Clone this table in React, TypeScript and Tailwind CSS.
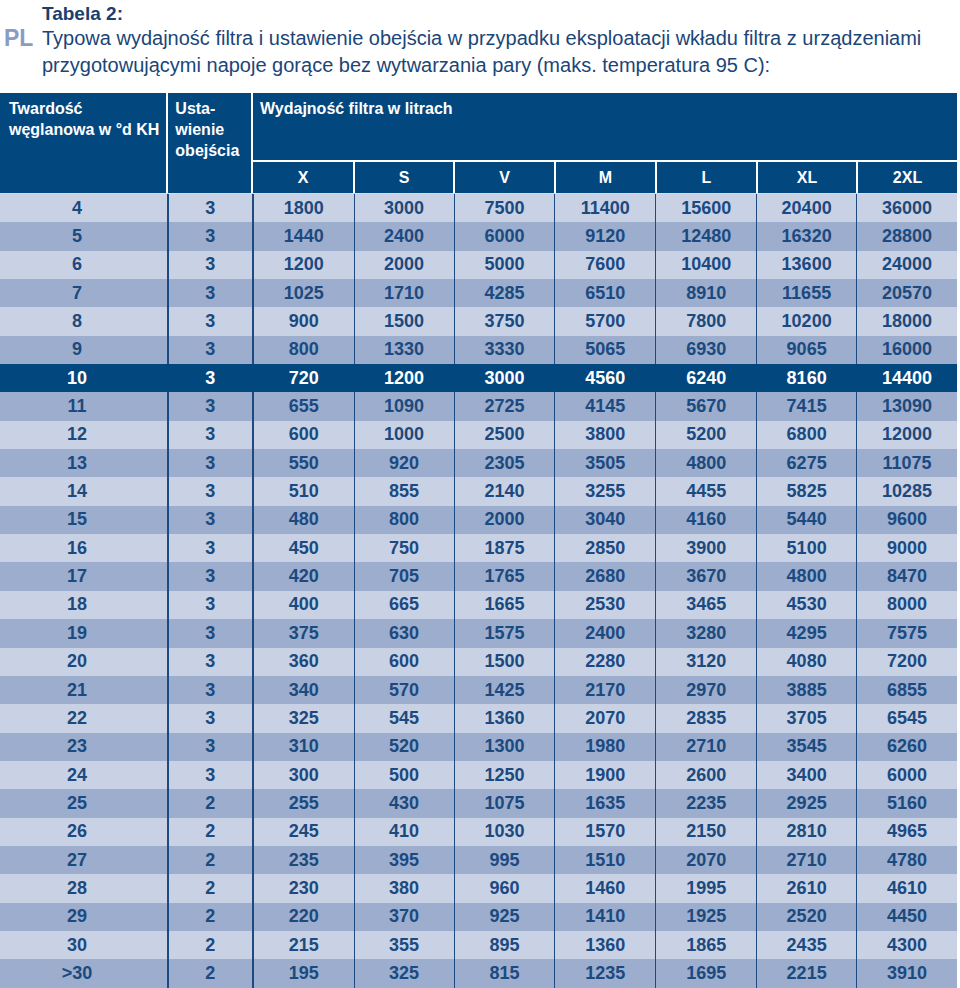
import React from "react";

const rows: string[][] = [
  ["4", "3", "1800", "3000", "7500", "11400", "15600", "20400", "36000"],
  ["5", "3", "1440", "2400", "6000", "9120", "12480", "16320", "28800"],
  ["6", "3", "1200", "2000", "5000", "7600", "10400", "13600", "24000"],
  ["7", "3", "1025", "1710", "4285", "6510", "8910", "11655", "20570"],
  ["8", "3", "900", "1500", "3750", "5700", "7800", "10200", "18000"],
  ["9", "3", "800", "1330", "3330", "5065", "6930", "9065", "16000"],
  ["10", "3", "720", "1200", "3000", "4560", "6240", "8160", "14400"],
  ["11", "3", "655", "1090", "2725", "4145", "5670", "7415", "13090"],
  ["12", "3", "600", "1000", "2500", "3800", "5200", "6800", "12000"],
  ["13", "3", "550", "920", "2305", "3505", "4800", "6275", "11075"],
  ["14", "3", "510", "855", "2140", "3255", "4455", "5825", "10285"],
  ["15", "3", "480", "800", "2000", "3040", "4160", "5440", "9600"],
  ["16", "3", "450", "750", "1875", "2850", "3900", "5100", "9000"],
  ["17", "3", "420", "705", "1765", "2680", "3670", "4800", "8470"],
  ["18", "3", "400", "665", "1665", "2530", "3465", "4530", "8000"],
  ["19", "3", "375", "630", "1575", "2400", "3280", "4295", "7575"],
  ["20", "3", "360", "600", "1500", "2280", "3120", "4080", "7200"],
  ["21", "3", "340", "570", "1425", "2170", "2970", "3885", "6855"],
  ["22", "3", "325", "545", "1360", "2070", "2835", "3705", "6545"],
  ["23", "3", "310", "520", "1300", "1980", "2710", "3545", "6260"],
  ["24", "3", "300", "500", "1250", "1900", "2600", "3400", "6000"],
  ["25", "2", "255", "430", "1075", "1635", "2235", "2925", "5160"],
  ["26", "2", "245", "410", "1030", "1570", "2150", "2810", "4965"],
  ["27", "2", "235", "395", "995", "1510", "2070", "2710", "4780"],
  ["28", "2", "230", "380", "960", "1460", "1995", "2610", "4610"],
  ["29", "2", "220", "370", "925", "1410", "1925", "2520", "4450"],
  ["30", "2", "215", "355", "895", "1360", "1865", "2435", "4300"],
  [">30", "2", "195", "325", "815", "1235", "1695", "2215", "3910"],
];

const sizes = ["X", "S", "V", "M", "L", "XL", "2XL"];
const dataW = ["w-[102px]", "w-[100px]", "w-[101px]", "w-[101px]", "w-[101px]", "w-[100px]", "w-[101px]"];

export default function App() {
  return (
    <div
      className="w-[960px] h-[988px] bg-white overflow-hidden text-[#1b4a80]"
      style={{ fontFamily: '"Liberation Sans", Arial, sans-serif' }}
    >
      <div className="grid grid-cols-[42px_1fr] pt-[2px]">
        <div />
        <div className="text-[19px] leading-[23px] font-bold text-[#1a3f6f]">Tabela 2:</div>
        <div className="pl-[4px] text-[23px] leading-[27px] font-bold text-[#8a9cc3]">PL</div>
        <div className="text-[20px] leading-[27px] text-[#1a4678]">
          Typowa wydajność filtra i ustawienie obejścia w przypadku eksploatacji wkładu filtra z urządzeniami
          <br />
          przygotowującymi napoje gorące bez wytwarzania pary (maks. temperatura 95 C):
        </div>
      </div>

      <div className="mt-[14px] w-[957px] font-bold">
        {/* header */}
        <div className="flex bg-[#03477f] text-white border-b border-[#d7dcea] h-[101px] text-[16px]">
          <div className="w-[167px] pl-[9px] pt-[5px] leading-[21px]">
            Twardość
            <br />
            węglanowa w °d KH
          </div>
          <div className="w-[85px] border-l-2 border-white pl-[7px] pt-[5px] leading-[21px]">
            Usta-
            <br />
            wienie
            <br />
            obejścia
          </div>
          <div className="flex-1 border-l-2 border-white flex flex-col">
            <div className="h-[69px] pl-[7px] pt-[5px] leading-[21px] border-b-2 border-white">
              Wydajność filtra w litrach
            </div>
            <div className="flex flex-1">
              {sizes.map((s, i) => (
                <div
                  key={s}
                  className={`${i === 0 ? "w-[100px]" : dataW[i]} ${i === 0 ? "" : "border-l-2 border-white"} flex items-center justify-center`}
                >
                  {s}
                </div>
              ))}
            </div>
          </div>
        </div>

        {/* body */}
        {rows.map((r, idx) => {
          const hl = r[0] === "10";
          const bg = hl ? "bg-[#03477f] text-white" : idx % 2 === 0 ? "bg-[#c9d1e5]" : "bg-[#9cadcd]";
          const bc = hl ? "border-[#03477f]" : "border-[#1d4a80]";
          return (
            <div key={r[0]} className={`flex h-[28.35px] items-center text-[18px] ${bg}`}>
              <div className="w-[167px] h-full flex items-center justify-center pr-[13px]">{r[0]}</div>
              <div className={`w-[85px] h-full border-l-2 ${bc} flex items-center justify-center`}>{r[1]}</div>
              {r.slice(2).map((v, i) => (
                <div
                  key={i}
                  className={`${dataW[i]} h-full ${i === 0 ? "border-l-2" : "border-l"} ${bc} flex items-center justify-center`}
                >
                  {v}
                </div>
              ))}
            </div>
          );
        })}
      </div>
    </div>
  );
}
